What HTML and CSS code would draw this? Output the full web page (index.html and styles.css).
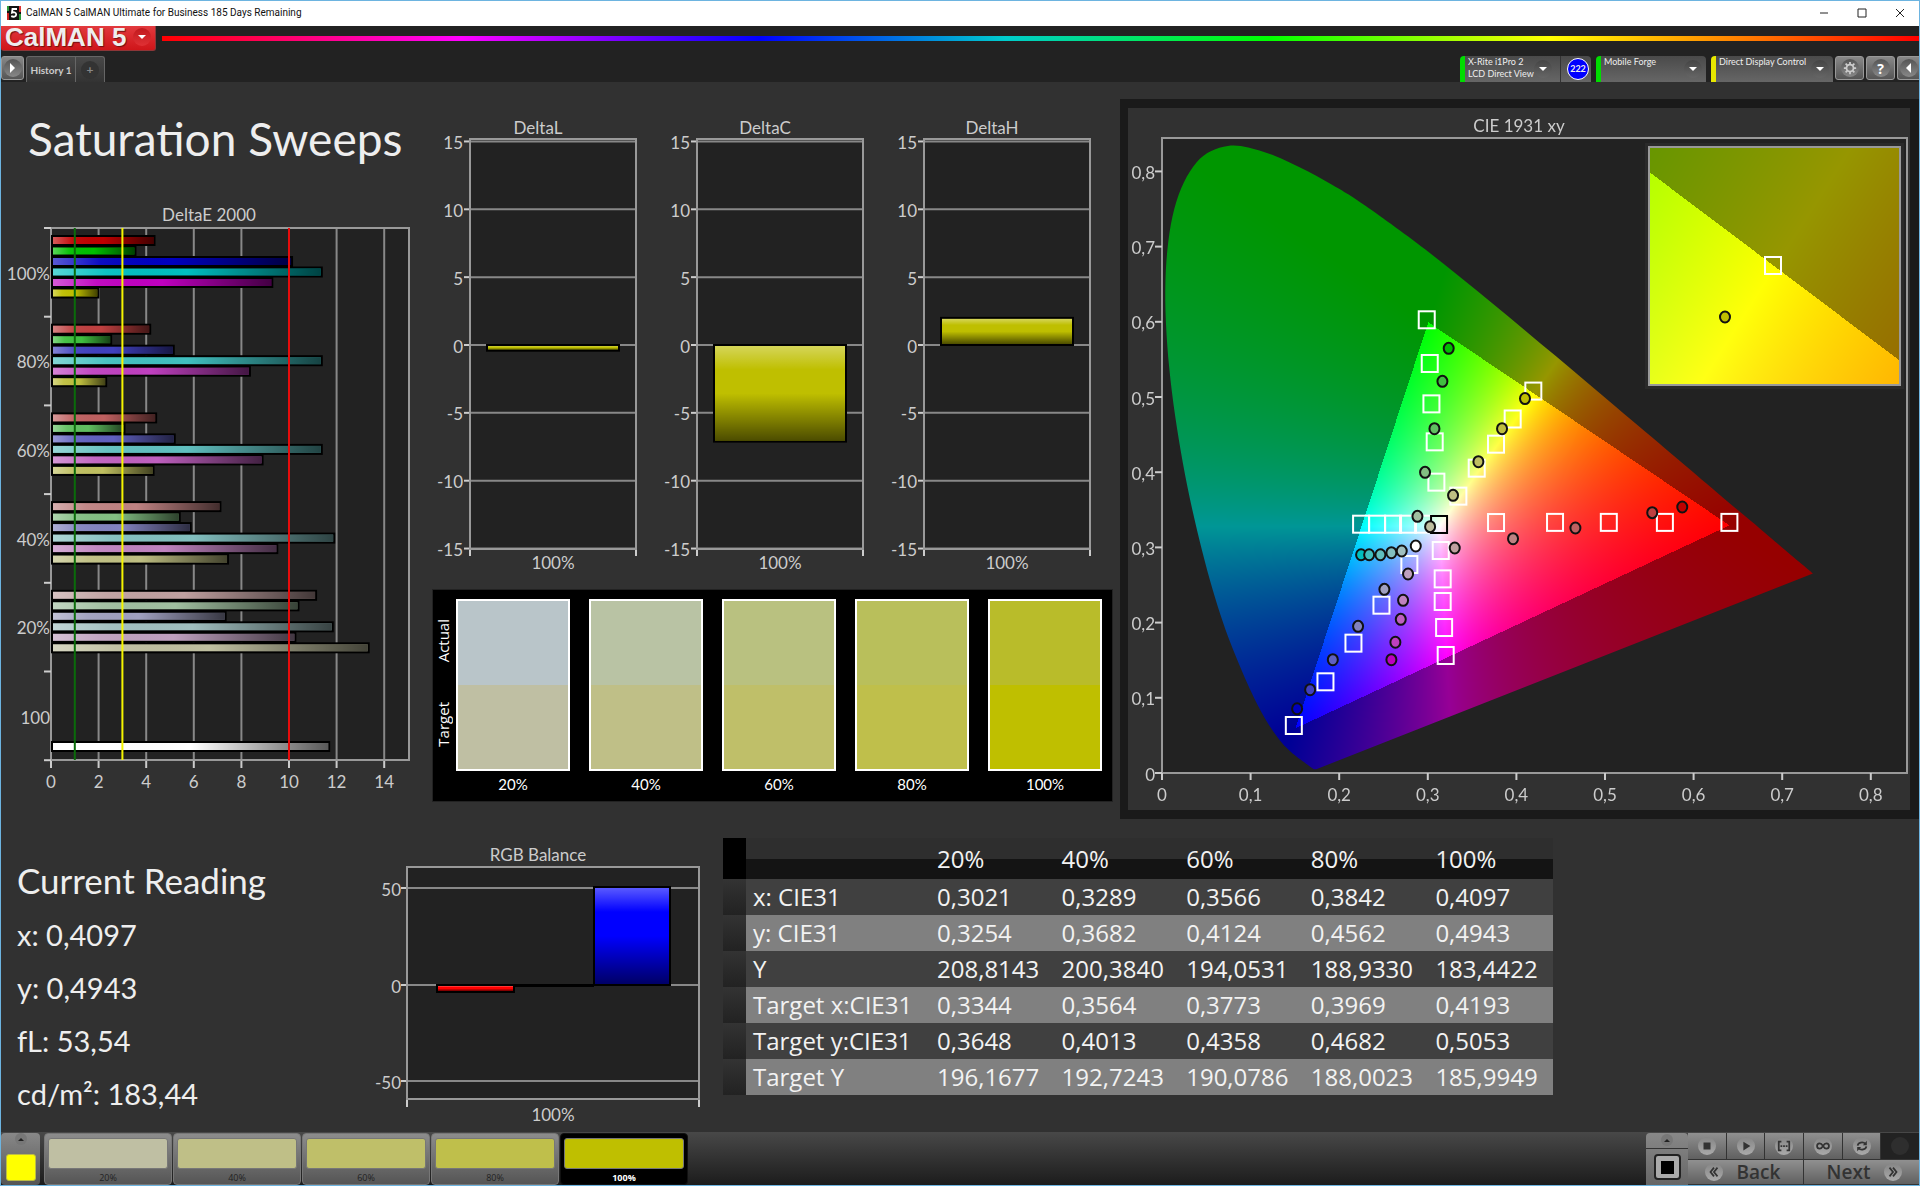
FILE: index.html
```
<!DOCTYPE html>
<html lang="en">
<head>
    <meta charset="UTF-8">
    <meta name="viewport" content="width=device-width, initial-scale=1.0">
    <title>CalMAN 5</title>
    <link rel="stylesheet" href="styles.css">
</head>
<body>

<!-- Window title bar -->
<div class="titlebar">
    <svg class="app-icon" viewBox="0 0 14 14">
        <rect width="14" height="14" fill="#111"/>
        <path d="M0 0h2v5H0z" fill="#2a9a3a"/>
        <path d="M0 7h2v7H0z" fill="#c22"/>
        <path d="M12 0h2v6h-2z" fill="#d33"/>
        <path d="M12 8h2v6h-2z" fill="#2a9a3a"/>
        <path d="M10 3H5.5L5 6.6C7 5.800 9.400 6.400 9.200 8.600 9 10.800 6.500 11.200 4.200 10.200" fill="none" stroke="#fff" stroke-width="1.800"/>
    </svg>
    <span class="window-title">CalMAN 5 CalMAN Ultimate for Business 185 Days Remaining</span>
    <div class="window-buttons">
        <button aria-label="Minimize"><svg viewBox="0 0 10 10"><path d="M1 5h8"/></svg></button>
        <button aria-label="Maximize"><svg viewBox="0 0 10 10"><path d="M1 1h8v8H1z"/></svg></button>
        <button aria-label="Close"><svg viewBox="0 0 10 10"><path d="M1 1l8 8M9 1L1 9"/></svg></button>
    </div>
</div>

<!-- Header -->
<header class="header">
    <div class="brand-row">
        <button class="brand">
            <span class="brand-name">CalMAN 5</span>
            <span class="round round-red"><i class="arrow-down"></i></span>
        </button>
        <div class="spectrum"></div>
    </div>
    <div class="tab-row">
        <button class="square play" aria-label="Open panel"><span class="round"><i class="arrow-right"></i></span></button>
        <div class="tabs">
            <button class="tab">History 1</button>
            <button class="tab tab-add" aria-label="Add tab"><span class="round round-dark">+</span></button>
        </div>
        <div class="devices">
            <button class="device device-meter">
                <span class="device-name">X-Rite i1Pro 2<br>LCD Direct View</span>
                <span class="round round-device"><i class="arrow-down"></i></span>
                <span class="device-badge"><b>222</b></span>
            </button>
            <button class="device device-source">
                <span class="device-name">Mobile Forge</span>
                <span class="round round-device"><i class="arrow-down"></i></span>
            </button>
            <button class="device device-display">
                <span class="device-name">Direct Display Control</span>
                <span class="round round-device"><i class="arrow-down"></i></span>
            </button>
        </div>
        <button class="square" aria-label="Settings">
            <span class="round"><svg class="gear" viewBox="0 0 16 16"><circle cx="8" cy="8" r="4"/><path d="M8 1v3M8 12v3M1 8h3M12 8h3M3 3l2 2M11 11l2 2M13 3l-2 2M5 11l-2 2"/></svg></span>
        </button>
        <button class="square" aria-label="Help"><span class="round help">?</span></button>
        <button class="square square-last" aria-label="Collapse"><span class="round"><i class="arrow-left"></i></span></button>
    </div>
</header>

<main class="workspace">
    <section class="top">
        <div class="left">
            <h1>Saturation Sweeps</h1>
            <svg id="delta-e" class="chart" viewBox="0 0 431 600"></svg>
        </div>

        <div class="middle">
            <div class="deltas">
                <svg id="delta-l" class="chart" viewBox="0 0 227 472"></svg>
                <svg id="delta-c" class="chart" viewBox="0 0 227 472"></svg>
                <svg id="delta-h" class="chart" viewBox="0 0 227 472"></svg>
            </div>
            <div class="swatches">
                <div class="swatch-side">
                    <span>Actual</span>
                    <span>Target</span>
                </div>
                <div class="swatch"><div class="patch patch-20"></div>20%</div>
                <div class="swatch"><div class="patch patch-40"></div>40%</div>
                <div class="swatch"><div class="patch patch-60"></div>60%</div>
                <div class="swatch"><div class="patch patch-80"></div>80%</div>
                <div class="swatch"><div class="patch patch-100"></div>100%</div>
            </div>
        </div>

        <div class="cie-panel">
            <div class="cie">
                <canvas id="cie-fill" width="782" height="702"></canvas>
                <svg id="cie-axes" class="chart" viewBox="0 0 782 702"></svg>
            </div>
        </div>
    </section>

    <section class="bottom">
        <div class="reading">
            <h2>Current Reading</h2>
            <p>x: 0,4097</p>
            <p>y: 0,4943</p>
            <p>fL: 53,54</p>
            <p>cd/m²: 183,44</p>
        </div>
        <svg id="rgb-balance" class="chart" viewBox="0 0 340 300"></svg>
        <table class="data">
            <thead>
                <tr><th class="handle"></th><th class="name"></th><th>20%</th><th>40%</th><th>60%</th><th>80%</th><th>100%</th></tr>
            </thead>
            <tbody>
                <tr><td class="handle"></td><th>x: CIE31</th><td>0,3021</td><td>0,3289</td><td>0,3566</td><td>0,3842</td><td>0,4097</td></tr>
                <tr><td class="handle"></td><th>y: CIE31</th><td>0,3254</td><td>0,3682</td><td>0,4124</td><td>0,4562</td><td>0,4943</td></tr>
                <tr><td class="handle"></td><th>Y</th><td>208,8143</td><td>200,3840</td><td>194,0531</td><td>188,9330</td><td>183,4422</td></tr>
                <tr><td class="handle"></td><th>Target x:CIE31</th><td>0,3344</td><td>0,3564</td><td>0,3773</td><td>0,3969</td><td>0,4193</td></tr>
                <tr><td class="handle"></td><th>Target y:CIE31</th><td>0,3648</td><td>0,4013</td><td>0,4358</td><td>0,4682</td><td>0,5053</td></tr>
                <tr><td class="handle"></td><th>Target Y</th><td>196,1677</td><td>192,7243</td><td>190,0786</td><td>188,0023</td><td>185,9949</td></tr>
            </tbody>
        </table>
    </section>
</main>

<!-- Pattern bar -->
<footer class="footer">
    <button class="current" aria-label="Current pattern">
        <span class="round round-small"><i class="arrow-up"></i></span>
        <span class="current-color"></span>
    </button>
    <div class="patterns">
        <button class="pattern"><span class="pattern-color color-20"></span>20%</button>
        <button class="pattern"><span class="pattern-color color-40"></span>40%</button>
        <button class="pattern"><span class="pattern-color color-60"></span>60%</button>
        <button class="pattern"><span class="pattern-color color-80"></span>80%</button>
        <button class="pattern active"><span class="pattern-color color-100"></span>100%</button>
    </div>
    <button class="window-toggle" aria-label="Pattern window">
        <span class="toggle-top"><span class="round round-small"><i class="arrow-up"></i></span></span>
        <span class="toggle-box"><i></i></span>
    </button>
    <div class="controls">
        <div class="control-row">
            <button aria-label="Stop"><span class="round round-light"><svg viewBox="0 0 16 16"><path d="M4 4h8v8H4z"/></svg></span></button>
            <button aria-label="Read"><span class="round round-light"><svg viewBox="0 0 16 16"><path d="M5 3l8 5-8 5z"/></svg></span></button>
            <button aria-label="Read series"><span class="round round-light"><svg viewBox="0 0 16 16"><path class="line" d="M5 3H2v10h3M11 3h3v10h-3"/><path d="M4 7h2v2H4zM7 7h2v2H7zM10 7h2v2h-2z"/></svg></span></button>
            <button aria-label="Continuous"><span class="round round-light"><svg viewBox="0 0 16 16"><path class="line" d="M8 8C6.500 5.500 5.500 5 4.200 5a3 3 0 0 0 0 6C5.500 11 6.500 10.500 8 8s2.500-3 3.800-3a3 3 0 0 1 0 6C10.500 11 9.500 10.500 8 8z"/></svg></span></button>
            <button aria-label="Refresh"><span class="round round-light"><svg viewBox="0 0 16 16"><path class="line" d="M3 7.500C3.500 4 9 2.500 12 5.500M13 8.500C12.500 12 7 13.500 4 10.500"/><path d="M13.500 2v5H9zM2.500 14V9H7z"/></svg></span></button>
            <button class="off" aria-label="Record" disabled><span class="round round-off"></span></button>
        </div>
        <div class="control-row">
            <button class="nav"><span class="round round-light"><svg viewBox="0 0 16 16"><path class="line" d="M8 3L4 8l4 5M12 3L8 8l4 5"/></svg></span>Back</button>
            <button class="nav">Next<span class="round round-light"><svg viewBox="0 0 16 16"><path class="line" d="M8 3l4 5-4 5M4 3l4 5-4 5"/></svg></span></button>
        </div>
    </div>
</footer>

<!-- Shared bar shading -->
<svg class="defs" width="0" height="0">
    <defs>
        <linearGradient id="shade-x">
            <stop offset="0" stop-color="#fff" stop-opacity="0.350"/>
            <stop offset="0.200" stop-color="#fff" stop-opacity="0.050"/>
            <stop offset="0.500" stop-color="#000" stop-opacity="0"/>
            <stop offset="1" stop-color="#000" stop-opacity="0.650"/>
        </linearGradient>
        <linearGradient id="shade-y" x2="0" y2="1">
            <stop offset="0" stop-color="#fff" stop-opacity="0.350"/>
            <stop offset="0.250" stop-color="#fff" stop-opacity="0"/>
            <stop offset="0.500" stop-color="#000" stop-opacity="0"/>
            <stop offset="1" stop-color="#000" stop-opacity="0.600"/>
        </linearGradient>
    </defs>
</svg>

<script src="script.js"></script>
</body>
</html>
```

FILE: styles.css
```
* {
    box-sizing: border-box;
}

body {
    margin: 0;
    min-height: 100vh;
    display: flex;
    flex-direction: column;
    background: #313131;
    border: 1px solid #6db4e0;
    color: #eee;
    font-family: Lato, "Open Sans", sans-serif;
    overflow-x: hidden;
}

button {
    margin: 0;
    padding: 0;
    border: none;
    font-family: inherit;
    color: inherit;
    cursor: pointer;
}

h1, h2, p {
    margin: 0;
    font-weight: normal;
}

.defs {
    position: absolute;
}

/* Title bar */
.titlebar {
    display: flex;
    align-items: center;
    height: 25px;
    padding: 0 0 2px 6px;
    background: #fff;
    color: #111;
}

.app-icon {
    width: 14px;
    height: 14px;
    margin-right: 5px;
}

.window-title {
    flex: 1;
    font-family: Roboto, sans-serif;
    font-size: 10px;
}

.window-buttons {
    display: flex;
}

.window-buttons button {
    width: 38px;
    height: 22px;
    background: none;
}

.window-buttons svg {
    width: 10px;
    height: 10px;
    fill: none;
    stroke: #222;
}

/* Header */
.header {
    height: 56px;
    background: #222;
    display: flex;
    flex-direction: column;
    justify-content: space-between;
}

.brand-row {
    display: flex;
    align-items: flex-start;
}

.brand {
    width: 155px;
    height: 25px;
    display: flex;
    align-items: center;
    gap: 7px;
    padding: 0 0 2px 4px;
    background: linear-gradient(#e23a3e, #cf1519);
    border: solid #8d3638;
    border-width: 0 1px 1px 0;
    border-radius: 0 0 3px 3px;
}

.brand-name {
    font-family: "Liberation Sans", sans-serif;
    font-size: 26px;
    font-weight: bold;
    line-height: 20px;
    color: #eee;
    text-shadow: 1px 1px 1px #701010;
    white-space: nowrap;
}

.spectrum {
    flex: 1;
    height: 5px;
    margin: 10px 0 0 6px;
    background: linear-gradient(90deg, #f00, #f0f 17%, #00f 34%, #0cc 48%, #0f0 63%, #ff0 79%, #f60 92%, #f00);
}

.round {
    display: inline-flex;
    align-items: center;
    justify-content: center;
    width: 18px;
    height: 18px;
    border-radius: 50%;
    background: linear-gradient(#555, #888);
}

.round-red {
    background: linear-gradient(#c01a1e, #e03034);
}

.round-dark {
    background: #333;
    color: #888;
    font-size: 12px;
}

.round-device {
    background: linear-gradient(#444, #666);
}

.round-small {
    width: 12px;
    height: 12px;
    background: #777;
}

.round-light {
    background: linear-gradient(#858585, #aaa);
}

.round-off {
    background: #2e2e2e;
}

.arrow-down {
    border: 4px solid transparent;
    border-top-color: #fff;
    border-bottom: 0;
}

.arrow-up {
    border: 3px solid transparent;
    border-bottom-color: #222;
    border-top: 0;
}

.arrow-right {
    border: 5px solid transparent;
    border-left-color: #fff;
    border-right: 0;
}

.arrow-left {
    border: 5px solid transparent;
    border-right-color: #fff;
    border-left: 0;
}

.tab-row {
    display: flex;
    align-items: flex-start;
    height: 26px;
}

.square {
    width: 29px;
    height: 24px;
    margin-right: 2px;
    background: linear-gradient(#888, #555);
    border: 1px solid #999;
    border-radius: 3px;
}

.play {
    width: 23px;
}

.square-last {
    width: 22px;
    margin-right: 0;
    border-right: 0;
    border-radius: 3px 0 0 3px;
}

.help {
    font-family: "Open Sans", sans-serif;
    font-size: 14px;
    font-weight: bold;
    color: #fff;
}

.gear {
    width: 14px;
    height: 14px;
    fill: none;
    stroke: #ccc;
    stroke-width: 2;
}

.tabs {
    display: flex;
}

.tab {
    width: 50px;
    height: 26px;
    background: linear-gradient(#484848, #333);
    border: 1px solid #666;
    border-bottom: 0;
    border-radius: 3px 0 0 0;
    color: #ccc;
    font-size: 10px;
    font-weight: bold;
    white-space: nowrap;
}

.tab-add {
    width: 29px;
    border-left: 0;
    border-radius: 0 3px 0 0;
}

.devices {
    flex: 1;
    display: flex;
    justify-content: flex-end;
    gap: 5px;
    margin-right: 2px;
}

.device {
    display: flex;
    align-items: center;
    height: 26px;
    padding-left: 3px;
    background: linear-gradient(#4a4a4a, #666);
    border-left: 5px solid #0d0;
    border-radius: 4px 4px 0 0;
    font-size: 9px;
    line-height: 12px;
    text-align: left;
}

.device-name {
    flex: 1;
    align-self: flex-start;
    white-space: nowrap;
}

.device-meter {
    width: 131px;
}

.device-source {
    width: 110px;
    padding-right: 4px;
}

.device-display {
    width: 122px;
    padding-right: 4px;
    border-left-color: #e8e800;
}

.device-display .round,
.device-source .round {
    flex: none;
}

.device-badge {
    margin-left: 8px;
    padding: 2px 2px 2px 6px;
    border-left: 1px solid #333;
}

.device-badge b {
    display: block;
    width: 22px;
    height: 22px;
    border: 1px solid #fff;
    border-radius: 50%;
    background: #00f;
    font-size: 9px;
    line-height: 20px;
    text-align: center;
}

/* Workspace */
.workspace {
    flex: 1;
}

.chart {
    display: block;
    width: 100%;
    font-size: 17px;
    fill: #ccc;
}

.chart .plot {
    fill: #222;
}

.chart .frame {
    fill: none;
    stroke: #999;
    stroke-width: 2;
}

.chart .grid {
    stroke: #888;
    stroke-width: 2;
}

.chart .tick {
    stroke: #ccc;
    stroke-width: 2;
}

.chart .bar {
    stroke: #000;
    stroke-width: 2;
}

.chart .target {
    fill: none;
    stroke: #fff;
    stroke-width: 2;
}

.chart .white-point {
    fill: none;
    stroke: #000;
    stroke-width: 2;
}

.chart .measured {
    stroke: #111;
    stroke-width: 2;
}

.top {
    display: grid;
    grid-template-columns: 431fr 688fr 799fr;
    align-items: start;
}

h1 {
    padding: 27px 0 31px 27px;
    font-size: 46px;
    line-height: 60px;
    white-space: nowrap;
}

.middle {
    padding: 28px 7px 0 0;
}

.deltas {
    display: grid;
    grid-template-columns: repeat(3, 1fr);
}

.swatches {
    display: grid;
    grid-template-columns: 4px repeat(5, 1fr);
    gap: 19px;
    margin-top: 7px;
    padding: 9px 10px 4px 0;
    background: #000;
    border: 1px solid #222;
    color: #fff;
    font-size: 15px;
    line-height: 26px;
    text-align: center;
}

.swatch-side {
    display: flex;
    flex-direction: column;
    justify-content: space-around;
    width: 20px;
    padding-bottom: 30px;
    font-family: "Open Sans", sans-serif;
    font-size: 15px;
    line-height: 20px;
}

.swatch-side span {
    writing-mode: vertical-rl;
    transform: rotate(180deg);
}

.patch {
    height: 172px;
    border: 2px solid #fff;
}

.patch-20 {
    background: linear-gradient(#b9c5c9 50%, #bfbfa3 50%);
}

.patch-40 {
    background: linear-gradient(#b9c3a4 50%, #bfbf87 50%);
}

.patch-60 {
    background: linear-gradient(#b9c180 50%, #bfbf69 50%);
}

.patch-80 {
    background: linear-gradient(#b9bf5b 50%, #bfbf4b 50%);
}

.patch-100 {
    background: linear-gradient(#b9bc2a 50%, #bfbf00 50%);
}

.cie-panel {
    margin-top: 17px;
    padding: 9px 9px 9px 8px;
    background: #1a1a1a;
}

.cie {
    display: grid;
    background: #313131;
}

.cie canvas,
.cie svg {
    grid-area: 1 / 1;
    width: 100%;
}

.bottom {
    display: grid;
    grid-template-columns: 363fr 340fr 830fr 367fr;
    column-gap: 6px;
    align-items: start;
    padding-top: 11px;
}

.reading {
    padding: 22px 0 0 16px;
    font-size: 29px;
    line-height: 53px;
}

.reading h2 {
    font-size: 35px;
    line-height: 56px;
}

.data {
    width: 100%;
    margin: 8px 0 0 7px;
    border-collapse: collapse;
    table-layout: fixed;
    font-family: "Open Sans", sans-serif;
    font-size: 24px;
    line-height: 36px;
    color: #f2f2f2;
    text-align: left;
    white-space: nowrap;
}

.data th,
.data td {
    padding: 0 0 0 7px;
    font-weight: normal;
}

.data thead th {
    height: 41px;
    font-size: 24px;
    background: linear-gradient(#2e2e2e 50%, #141414 50%);
}

.data .name {
    width: 184px;
}

.data .handle {
    width: 23px;
    padding: 0;
    background: linear-gradient(#333, #222);
}

.data thead .handle {
    background: #000;
}

.data tbody tr {
    height: 36px;
    background: #404040;
}

.data tbody tr:nth-child(even) {
    background: #808080;
}

/* Footer */
.footer {
    display: flex;
    height: 53px;
    padding-top: 1px;
    background: linear-gradient(#484848, #1c1c1c);
    color: #222;
}

.current {
    display: flex;
    flex-direction: column;
    align-items: center;
    gap: 9px;
    width: 39px;
    margin-right: 4px;
    background: linear-gradient(#888, #555);
    border-radius: 4px;
}

.current-color {
    width: 30px;
    height: 27px;
    background: #ff0;
    border: 1px solid #bb4;
    border-radius: 3px;
}

.patterns {
    flex: 1;
    display: flex;
    gap: 1px;
}

.pattern {
    display: flex;
    flex-direction: column;
    align-items: center;
    gap: 2px;
    width: 128px;
    padding-top: 4px;
    background: linear-gradient(#8c8c8c, #555);
    border: 1px solid #777;
    border-radius: 4px;
    font-family: "Open Sans", sans-serif;
    font-size: 9px;
}

.pattern.active {
    background: #000;
    border-color: #111;
    color: #fff;
    font-weight: bold;
}

.pattern-color {
    width: 120px;
    height: 32px;
    border: 1px solid #777;
    border-radius: 3px;
}

.color-20 {
    background: #bfbfa3;
}

.color-40 {
    background: #bfbf87;
}

.color-60 {
    background: #bfbf69;
}

.color-80 {
    background: #bfbf4b;
}

.color-100 {
    background: #bfbf00;
}

.window-toggle {
    display: flex;
    flex-direction: column;
    align-items: center;
    width: 42px;
    background: linear-gradient(#888, #666);
    border-radius: 4px 4px 0 0;
}

.toggle-top {
    display: flex;
    justify-content: center;
    width: 100%;
    height: 16px;
    padding-top: 1px;
    border-bottom: 1px solid #333;
}

.toggle-box {
    display: flex;
    align-items: center;
    justify-content: center;
    width: 27px;
    height: 26px;
    margin-top: 5px;
    border: 2px solid #222;
    border-radius: 4px;
    background: #aaa;
}

.toggle-box i {
    width: 13px;
    height: 13px;
    background: #000;
}

.controls {
    width: 231px;
    display: grid;
    grid-template-rows: 26px 24px;
    gap: 1px;
    background: #333;
}

.control-row {
    display: flex;
    gap: 1px;
}

.control-row button {
    flex: 1;
    display: flex;
    align-items: center;
    justify-content: center;
    background: linear-gradient(#909090, #606060);
}

.control-row .off {
    background: #222;
}

.control-row svg {
    width: 14px;
    height: 14px;
    fill: #333;
}

.control-row .line {
    fill: none;
    stroke: #333;
    stroke-width: 2;
}

.control-row .nav {
    gap: 14px;
    padding-right: 6px;
    color: #333;
    font-family: "Open Sans", sans-serif;
    font-size: 19px;
    font-weight: 600;
    line-height: 24px;
}

.control-row .nav + .nav {
    padding: 0 0 0 6px;
}
```

FILE: script.js
```
const hues = {
    red: [1, 0, 0],
    green: [0, 1, 0],
    blue: [0, 0, 1],
    cyan: [0, 1, 1],
    magenta: [1, 0, 1],
    yellow: [1, 1, 0]
};
// low channel of a patch for 100, 80, 60, 40 and 20% saturation
const lows = [0, 64, 96, 130, 160];

function patchColor(hue, level) {
    return "rgb(" + hues[hue].map(c => c ? 191 : lows[level]).join(",") + ")";
}

function add(parent, name, attrs, text) {
    let node = document.createElementNS("http://www.w3.org/2000/svg", name);
    for (let key in attrs) node.setAttribute(key, attrs[key]);
    if (text !== undefined) node.textContent = text;
    parent.appendChild(node);
    return node;
}

function line(svg, x1, y1, x2, y2, cls) {
    return add(svg, "line", { x1, y1, x2, y2, class: cls });
}

function label(svg, x, y, text, anchor) {
    add(svg, "text", { x, y, "text-anchor": anchor || "middle", "dominant-baseline": "central" }, text);
}

function bar(svg, x, y, width, height, color, shade) {
    add(svg, "rect", { x, y, width, height, fill: color, class: "bar" });
    if (width > 2 && height > 2) {
        add(svg, "rect", { x: x + 1, y: y + 1, width: width - 2, height: height - 2, fill: "url(#" + shade + ")" });
    }
}

function plot(svg, x1, y1, x2, y2, cls) {
    add(svg, "rect", { x: x1, y: y1, width: x2 - x1, height: y2 - y1, class: cls });
}

// DeltaE 2000, horizontal bars
function drawDeltaE() {
    let svg = document.getElementById("delta-e");
    let groups = [
        ["100%", 4.39, 3.59, 10.17, 11.42, 9.34, 2.03],
        ["80%", 4.21, 2.57, 5.2, 11.42, 8.4, 2.36],
        ["60%", 4.46, 3.13, 5.24, 11.42, 8.93, 4.35],
        ["40%", 7.16, 5.45, 5.91, 11.94, 9.55, 7.48],
        ["20%", 11.18, 10.44, 7.38, 11.88, 10.31, 13.39]
    ];
    let x0 = 50, unit = 23.8, top = 28, bottom = 560, step = 88.7;

    label(svg, 208, 14, "DeltaE 2000");
    plot(svg, x0, top, 408, bottom, "plot");
    for (let v = 0; v <= 14; v += 2) {
        let x = x0 + v * unit;
        line(svg, x, top, x, bottom, "grid");
        line(svg, x, bottom, x, bottom + 8, "tick");
        label(svg, x, 581, v);
    }
    plot(svg, x0, top, 408, bottom, "frame");
    for (let i = 0; i <= 6; i++) {
        line(svg, x0 - 7, top + i * step, x0, top + i * step, "tick");
    }
    groups.forEach((group, g) => {
        label(svg, 49, top + g * step + 45, group[0], "end");
        Object.keys(hues).forEach((hue, i) => {
            bar(svg, x0 + 1, top + g * step + 8 + i * 10.5, group[i + 1] * unit - 2, 9, patchColor(hue, g), "shade-x");
        });
    });
    label(svg, 49, 517, "100", "end");
    bar(svg, x0 + 1, 542, 11.73 * unit - 2, 9, "#fff", "shade-x");

    [[1, "#0a6b0a"], [3, "#f5f500"], [10, "#e80c0c"]].forEach(limit => {
        let x = x0 + limit[0] * unit;
        line(svg, x, top, x, bottom).setAttribute("style", "stroke-width:2;stroke:" + limit[1]);
    });
}

// DeltaL, DeltaC and DeltaH
function drawDelta(id, title, value) {
    let svg = document.getElementById(id);
    let zero = 235, unit = 13.57;

    label(svg, 106, 17, title);
    plot(svg, 38, 29, 204, 439, "plot");
    for (let v = -15; v <= 15; v += 5) {
        let y = zero - v * unit;
        line(svg, 38, y, 204, y, "grid");
        line(svg, 32, y, 38, y, "tick");
        label(svg, 31, y + 1, v, "end");
    }
    plot(svg, 38, 29, 204, 439, "frame");
    line(svg, 38, 440, 38, 446, "tick");
    line(svg, 204, 440, 204, 446, "tick");
    bar(svg, 55, zero - Math.max(value, 0) * unit, 132, Math.abs(value) * unit, "#bfbf00", "shade-y");
    label(svg, 121, 452, "100%");
}

function drawBalance() {
    let svg = document.getElementById("rgb-balance");

    label(svg, 168, 24, "RGB Balance");
    plot(svg, 37, 37, 329, 269, "plot");
    [[50, 58], [0, 155], [-50, 251]].forEach(row => {
        line(svg, 37, row[1], 329, row[1], "grid");
        line(svg, 31, row[1], 37, row[1], "tick");
        label(svg, 31, row[1] + 1, row[0], "end");
    });
    plot(svg, 37, 37, 329, 269, "frame");
    line(svg, 37, 270, 37, 277, "tick");
    line(svg, 329, 270, 329, 277, "tick");
    bar(svg, 67, 155, 77, 7, "#f00", "shade-y");
    bar(svg, 144, 155, 79, 1, "#000", "shade-y");
    bar(svg, 224, 57, 76, 98, "#00f", "shade-y");
    label(svg, 183, 284, "100%");
}

// CIE 1931 chromaticity diagram
const cie = { x: 34, y: 665, sx: 886, sy: 752, right: 779, top: 30 };
const inset = { x: 521, y: 39, width: 251, height: 238, cx: 0.4193, cy: 0.5053, span: 0.05 };
const gamut = [[0.64, 0.33], [0.3, 0.6], [0.15, 0.06]];
const locus = [
    [.1741, .0050], [.1714, .0051], [.1689, .0069], [.1644, .0109], [.1566, .0177], [.1510, .0227],
    [.1440, .0297], [.1355, .0399], [.1241, .0578], [.1096, .0868], [.0913, .1327], [.0687, .2007],
    [.0454, .2950], [.0235, .4127], [.0082, .5384], [.0039, .6548], [.0139, .7502], [.0389, .8120],
    [.0743, .8338], [.1142, .8262], [.1547, .8059], [.1929, .7816], [.2296, .7543], [.3016, .6923],
    [.3731, .6245], [.4441, .5547], [.5125, .4866], [.5752, .4242], [.6270, .3725], [.6658, .3340],
    [.6915, .3083], [.7190, .2809], [.7347, .2653]
];

function inGamut(x, y) {
    return gamut.every((a, i) => {
        let b = gamut[(i + 1) % 3];
        return (b[0] - a[0]) * (y - a[1]) - (b[1] - a[1]) * (x - a[0]) >= 0;
    });
}

function xyColor(x, y) {
    let X = x / y, Z = (1 - x - y) / y;
    let rgb = [
        3.2406 * X - 1.5372 - 0.4986 * Z,
        -0.9689 * X + 1.8758 + 0.0415 * Z,
        0.0557 * X - 0.2040 + 1.0570 * Z
    ].map(c => Math.max(c, 0));
    let scale = (inGamut(x, y) ? 255 : 150) / Math.max(...rgb);
    return rgb.map(c => c * scale);
}

// Paints a width x height block, toXY maps a pixel to chromaticity
function paint(width, height, toXY) {
    let canvas = document.createElement("canvas");
    canvas.width = width;
    canvas.height = height;
    let ctx = canvas.getContext("2d");
    let image = ctx.createImageData(width, height);
    for (let j = 0; j < height; j++) {
        for (let i = 0; i < width; i++) {
            let xy = toXY(i, j);
            if (xy[1] <= 0) continue;
            let rgb = xyColor(xy[0], xy[1]);
            image.data.set([rgb[0], rgb[1], rgb[2], 255], (j * width + i) * 4);
        }
    }
    ctx.putImageData(image, 0, 0);
    return canvas;
}

function drawCieFill() {
    let canvas = document.getElementById("cie-fill");
    let ctx = canvas.getContext("2d");
    ctx.fillStyle = "#222";
    ctx.fillRect(cie.x, cie.top, cie.right - cie.x, cie.y - cie.top);

    // smooth curve through all locus points
    let points = locus.map(p => [cie.x + p[0] * cie.sx, cie.y - p[1] * cie.sy]);
    let last = points.length - 1;
    ctx.save();
    ctx.beginPath();
    ctx.moveTo(points[0][0], points[0][1]);
    for (let i = 0; i < last; i++) {
        let p = points[Math.max(i - 1, 0)], a = points[i], b = points[i + 1], n = points[Math.min(i + 2, last)];
        ctx.bezierCurveTo(
            a[0] + (b[0] - p[0]) / 6, a[1] + (b[1] - p[1]) / 6,
            b[0] - (n[0] - a[0]) / 6, b[1] - (n[1] - a[1]) / 6,
            b[0], b[1]
        );
    }
    ctx.closePath();
    ctx.clip();
    ctx.drawImage(paint(canvas.width, canvas.height, (i, j) => [(i - cie.x) / cie.sx, (cie.y - j) / cie.sy]), 0, 0);
    ctx.restore();

    ctx.fillStyle = "#2a2a2a";
    ctx.fillRect(inset.x - 4, inset.y - 4, inset.width + 8, inset.height + 8);
    ctx.drawImage(paint(inset.width, inset.height, (i, j) => [
        inset.cx + (i / inset.width - 0.5) * inset.span,
        inset.cy - (j / inset.height - 0.5) * inset.span
    ]), inset.x, inset.y);
}

function target(svg, x, y, cls) {
    add(svg, "rect", { x: x - 8, y: y - 9, width: 16, height: 17, class: cls || "target" });
}

function measured(svg, x, y, color) {
    add(svg, "ellipse", { cx: x, cy: y, rx: 5, ry: 5.5, fill: color, class: "measured" });
}

function drawCieAxes() {
    let svg = document.getElementById("cie-axes");
    let targets = [
        [.2988, .6020], [.3022, .5439], [.3041, .4902], [.3078, .4397], [.3097, .3861],
        [.4191, .5072], [.3958, .4701], [.3770, .4366], [.3552, .4047], [.3345, .3675],
        [.3770, .3324], [.4436, .3326], [.5043, .3326], [.5676, .3326], [.6404, .3326],
        [.2247, .3302], [.2428, .3302], [.2608, .3302], [.2777, .3302], [.2947, .3302],
        [.3146, .2952], [.3168, .2575], [.3168, .2274], [.3184, .1928], [.3202, .1556],
        [.2792, .2766], [.2477, .2225], [.2161, .1720], [.1845, .1206], [.1488, .0625]
    ];
    // 100% first
    let readings = {
        red: [[.5872, .3537], [.5533, .3462], [.4666, .3258], [.3962, .3116], [.3304, .2992]],
        green: [[.3236, .5647], [.3165, .5208], [.3075, .4579], [.2969, .3998], [.2883, .3413]],
        blue: [[.1525, .0855], [.1672, .1108], [.1928, .1507], [.2213, .1950], [.2510, .2442]],
        cyan: [[.2247, .2903], [.2338, .2903], [.2465, .2903], [.2589, .2930], [.2706, .2952]],
        magenta: [[.2589, .1507], [.2634, .1738], [.2695, .2043], [.2721, .2296], [.2777, .2646]],
        yellow: [[.4097, .4979], [.3838, .4579], [.3571, .4140], [.3285, .3692], [.3026, .3276]]
    };
    let px = x => cie.x + x * cie.sx;
    let py = y => cie.y - y * cie.sy;

    label(svg, 391, 17, "CIE 1931 xy");
    plot(svg, cie.x, cie.top, cie.right, cie.y, "frame");
    for (let i = 0; i <= 8; i++) {
        let text = i ? "0," + i : "0";
        line(svg, px(i / 10), cie.y, px(i / 10), cie.y + 7, "tick");
        label(svg, px(i / 10), 686, text);
        line(svg, cie.x - 7, py(i / 10), cie.x, py(i / 10), "tick");
        label(svg, 27, py(i / 10) + 1, text, "end");
    }

    targets.forEach(t => target(svg, px(t[0]), py(t[1])));
    target(svg, px(.3127), py(.3298), "white-point");
    for (let hue in readings) {
        readings[hue].forEach((r, level) => measured(svg, px(r[0]), py(r[1]), patchColor(hue, level)));
    }
    measured(svg, px(.2864), py(.3019), "#fff");

    plot(svg, inset.x, inset.y, inset.x + inset.width, inset.y + inset.height, "frame");
    target(svg, 645, 158);
    measured(svg, 597, 209, patchColor("yellow", 0));
}

drawDeltaE();
drawDelta("delta-l", "DeltaL", -0.42);
drawDelta("delta-c", "DeltaC", -7.12);
drawDelta("delta-h", "DeltaH", 2);
drawBalance();
drawCieFill();
drawCieAxes();
```
